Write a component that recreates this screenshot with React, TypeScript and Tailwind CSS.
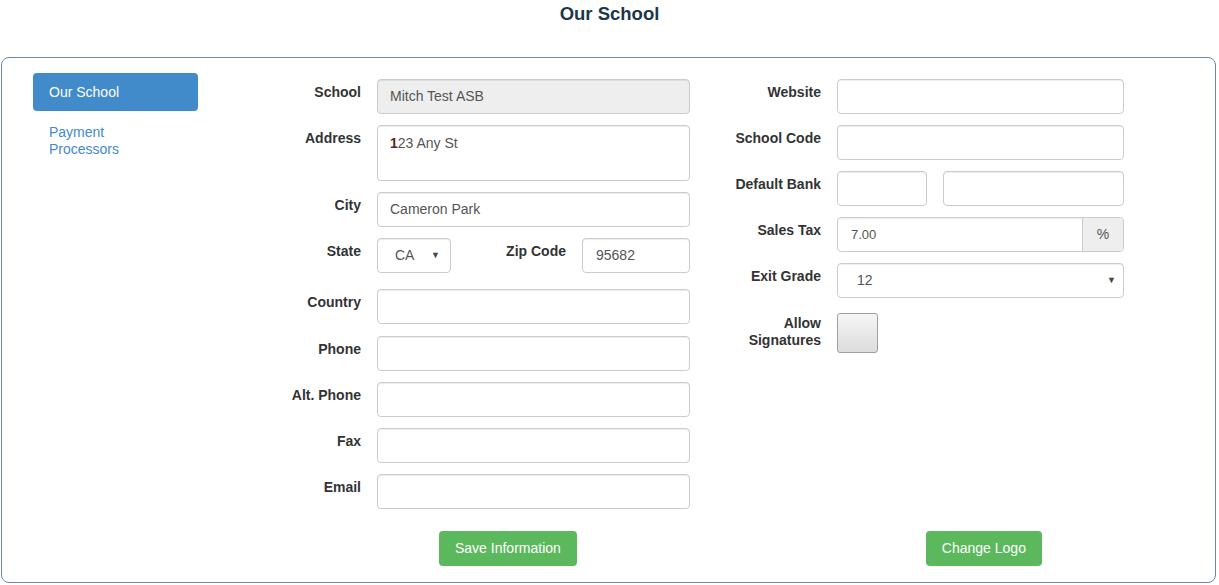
import React from "react";

const font = { fontFamily: '"Liberation Sans", Arial, Helvetica, sans-serif' };

const baseCls =
  "h-[35px] border border-[#cccccc] rounded-[4px] shadow-[inset_0_1px_1px_rgba(0,0,0,0.075)] px-3 flex items-center text-[14px] text-[#555555]";
const inputCls = `${baseCls} bg-white`;

function Label({ children, w }: { children: React.ReactNode; w: string }) {
  return (
    <div className={`${w} shrink-0 text-right font-bold text-[14px] leading-[20px] pt-[3px] text-[#333333]`}>
      {children}
    </div>
  );
}

function Row({ label, lw, children }: { label: React.ReactNode; lw: string; children: React.ReactNode }) {
  return (
    <div className="flex gap-4">
      <Label w={lw}>{label}</Label>
      {children}
    </div>
  );
}

function Caret() {
  return <span className="text-[9px] text-[#444]">▼</span>;
}

export default function App() {
  const lw = "w-[100px]";
  const rw = "w-[110px]";
  return (
    <div className="w-[1219px] h-[585px] bg-white overflow-hidden" style={font}>
      <div className="h-[57px] pt-[3px] text-center text-[18.5px] leading-[22px] font-bold text-[#1c3746]">
        Our School
      </div>
      <div className="ml-[1px] w-[1215px] h-[526px] border border-[#6d87a6] rounded-[8px] flex pt-[15px]">
        {/* sidebar */}
        <div className="ml-[31px] w-[165px] shrink-0">
          <div className="h-[38px] rounded-[4px] bg-[#428bca] text-white text-[14px] flex items-center pl-4">
            Our School
          </div>
          <div className="mt-[13px] pl-4 text-[14px] leading-[17px] text-[#428bca]">
            Payment
            <br />
            Processors
          </div>
        </div>

        {/* main */}
        <div className="ml-[63px] pt-[6px] flex flex-col">
          <div className="flex gap-[21px]">
            {/* left column */}
            <div className="w-[429px] flex flex-col gap-[11px]">
              <Row label="School" lw={lw}>
                <div className={`${baseCls} w-[313px] bg-[#eeeeee]`}>Mitch Test ASB</div>
              </Row>
              <Row label="Address" lw={lw}>
                <div className="w-[313px] h-[56px] border border-[#cccccc] rounded-[4px] shadow-[inset_0_1px_1px_rgba(0,0,0,0.075)] px-3 pt-[7px] text-[14px] leading-[20px] text-[#555555]">
                  <span className="text-[#5a2626] font-bold">1</span>23 Any St
                </div>
              </Row>
              <Row label="City" lw={lw}>
                <div className={`${inputCls} w-[313px]`}>Cameron Park</div>
              </Row>
              <div className="flex mb-[5px]">
                <Label w={lw}>State</Label>
                <div className={`${inputCls} ml-4 w-[74px] justify-between text-[13px] pl-[17px] pr-[10px]`}>
                  <span>CA</span>
                  <Caret />
                </div>
                <div className="w-[115px] shrink-0 text-right font-bold text-[14px] leading-[20px] pt-[3px] text-[#333333]">
                  Zip Code
                </div>
                <div className={`${inputCls} ml-4 w-[108px] text-[13px] pl-[13px]`}>95682</div>
              </div>
              <Row label="Country" lw={lw}>
                <div className={`${inputCls} w-[313px]`}></div>
              </Row>
              <div className="flex gap-4 mt-[1px]">
                <Label w={lw}>Phone</Label>
                <div className={`${inputCls} w-[313px]`}></div>
              </div>
              <Row label="Alt. Phone" lw={lw}>
                <div className={`${inputCls} w-[313px]`}></div>
              </Row>
              <Row label="Fax" lw={lw}>
                <div className={`${inputCls} w-[313px]`}></div>
              </Row>
              <Row label="Email" lw={lw}>
                <div className={`${inputCls} w-[313px]`}></div>
              </Row>
            </div>

            {/* right column */}
            <div className="flex flex-col gap-[11px]">
              <Row label="Website" lw={rw}>
                <div className={`${inputCls} w-[287px]`}></div>
              </Row>
              <Row label="School Code" lw={rw}>
                <div className={`${inputCls} w-[287px]`}></div>
              </Row>
              <Row label="Default Bank" lw={rw}>
                <div className="flex gap-4">
                  <div className={`${inputCls} w-[90px]`}></div>
                  <div className={`${inputCls} w-[181px]`}></div>
                </div>
              </Row>
              <Row label="Sales Tax" lw={rw}>
                <div className="flex w-[287px] h-[35px] border border-[#cccccc] rounded-[4px] shadow-[inset_0_1px_1px_rgba(0,0,0,0.075)] overflow-hidden">
                  <div className="flex-1 flex items-center pl-[13px] text-[13px] text-[#555555]">7.00</div>
                  <div className="w-[41px] border-l border-[#cccccc] bg-[#eeeeee] flex items-center justify-center text-[14px] text-[#555555]">
                    %
                  </div>
                </div>
              </Row>
              <Row label="Exit Grade" lw={rw}>
                <div className={`${inputCls} w-[287px] justify-between text-[13px] pl-[19px] pr-[7px]`}>
                  <span>12</span>
                  <Caret />
                </div>
              </Row>
              <div className="flex gap-4 pt-[4px]">
                <div className={`${rw} shrink-0 text-right font-bold text-[14px] leading-[17px] pt-[2px] text-[#333333]`}>
                  Allow
                  <br />
                  Signatures
                </div>
                <div className="w-[41px] h-[40px] rounded-[3px] border border-[#a0a0a0] bg-gradient-to-b from-[#f6f6f6] to-[#dcdcdc]"></div>
              </div>
            </div>
          </div>

          {/* buttons */}
          <div className="flex mt-[22px]">
            <div className="ml-[178px] h-[35px] px-4 rounded-[4px] bg-[#5cb85c] text-white text-[14px] flex items-center">
              Save Information
            </div>
            <div className="ml-[349px] h-[35px] px-4 rounded-[4px] bg-[#5cb85c] text-white text-[14px] flex items-center">
              Change Logo
            </div>
          </div>
        </div>
      </div>
    </div>
  );
}
